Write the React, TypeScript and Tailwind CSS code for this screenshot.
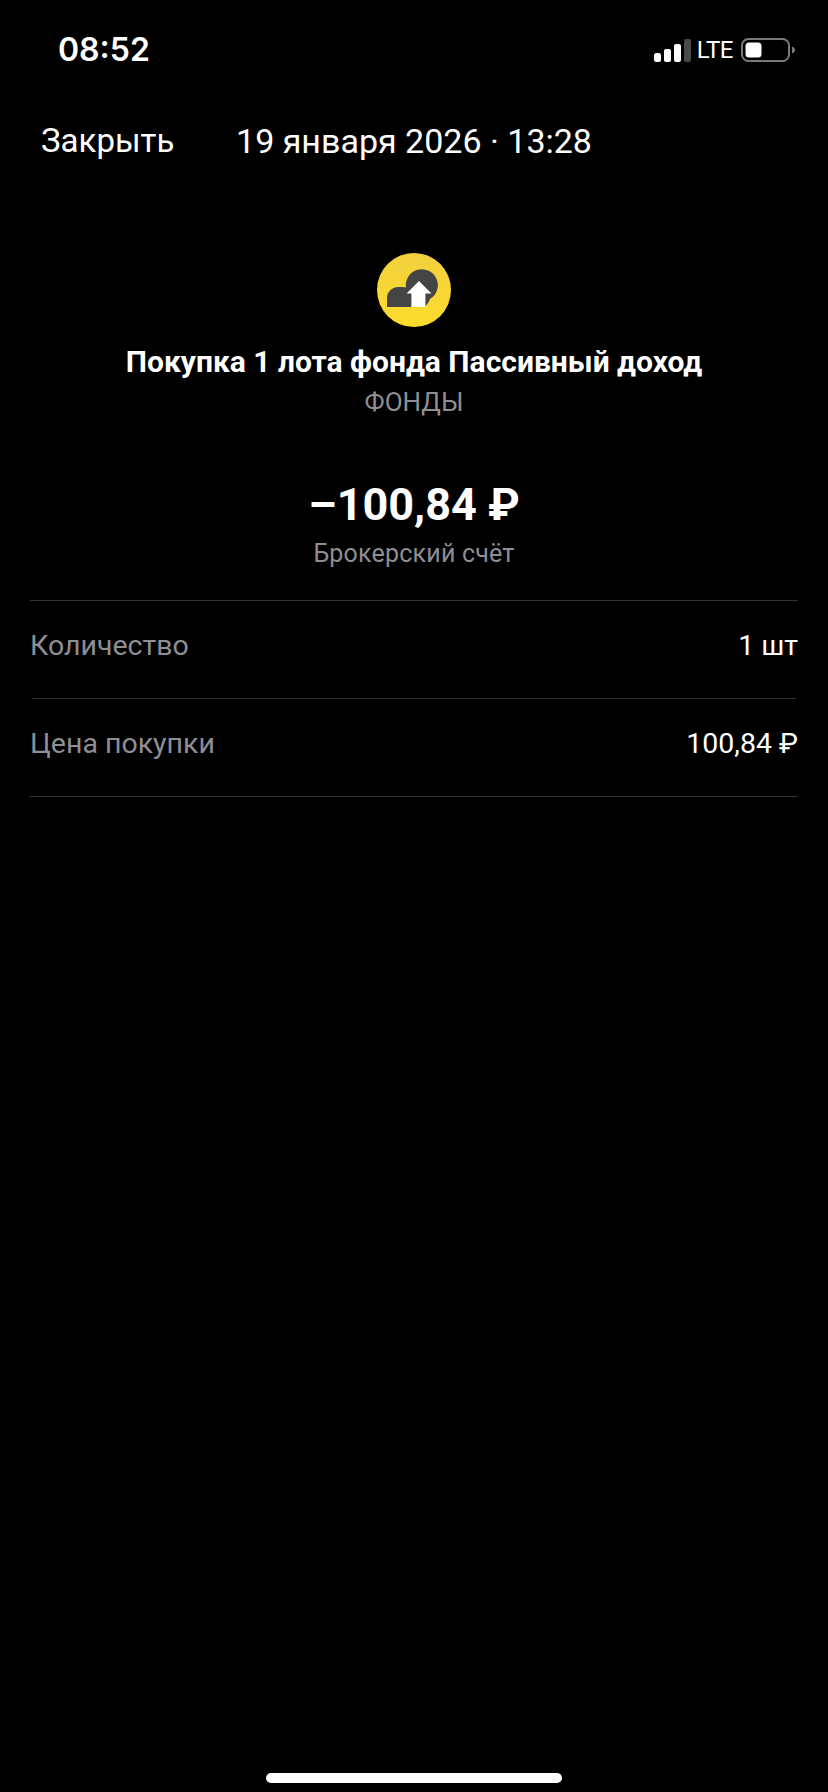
const sans = "font-['Roboto','Liberation_Sans',sans-serif]";

function SignalIcon() {
  return (
    <svg width="37" height="23" viewBox="0 0 37 23" fill="none">
      <rect x="0" y="14" width="7" height="9" rx="2.5" fill="#fff" />
      <rect x="10" y="10" width="7" height="13" rx="2" fill="#fff" />
      <rect x="20" y="5" width="7" height="18" rx="2" fill="#fff" />
      <rect x="30" y="0" width="7" height="23" rx="2" fill="#4a4a4a" />
    </svg>
  );
}

function BatteryIcon() {
  return (
    <svg width="54" height="24" viewBox="0 0 54 24" fill="none">
      <rect x="1" y="1" width="47" height="22" rx="6.5" stroke="#7a7a7a" strokeWidth="2" />
      <rect x="4.5" y="4.5" width="16" height="15" rx="3.5" fill="#fff" />
      <path d="M51 8.5 C53 9.5 54 10.5 54 12 C54 13.5 53 14.5 51 15.5 Z" fill="#7a7a7a" />
    </svg>
  );
}

function FundIcon() {
  return (
    <svg width="74" height="74" viewBox="0 0 74 74">
      <defs>
        <linearGradient id="fund-bg" x1="0" y1="0" x2="0" y2="1">
          <stop offset="0" stopColor="#f2d03e" />
          <stop offset="1" stopColor="#fddc2d" />
        </linearGradient>
      </defs>
      <circle cx="37" cy="37" r="37" fill="url(#fund-bg)" />
      <path
        d="M10 54 V45 C10 39 15 34 21 34 C24 34 27 34 29 34.5 A16 16 0 1 1 53 46 C52 49 50 52 47 54 Z"
        fill="#454545"
      />
      <path d="M29.5 40.6 L42 28 L54.5 40.6 L48.4 40.6 L48.4 54 L34.4 54 L34.4 40.6 Z" fill="#fff" />
    </svg>
  );
}

function Row({ label, value }: { label: string; value: string }) {
  return (
    <div className="flex items-center justify-between h-[97px] pb-[8px] mx-[30px] text-[28.5px] leading-[32px]">
      <span className="text-[#8e8e93]">{label}</span>
      <span className="text-white">{value}</span>
    </div>
  );
}

export default function App() {
  return (
    <div className={`${sans} relative h-[1792px] w-[828px] bg-black text-white overflow-hidden flex flex-col`}>
      {/* status bar */}
      <div className="flex items-center justify-between h-[100px] pl-[58px] pr-[33px]">
        <span className="text-[32px] font-semibold leading-[40px] font-['Inter',sans-serif]">08:52</span>
        <div className="flex items-center">
          <SignalIcon />
          <span className="ml-[6px] mr-[8px] text-[24px] leading-[28px] tracking-[-0.5px]">LTE</span>
          <BatteryIcon />
        </div>
      </div>

      {/* header */}
      <div className="grid grid-cols-[1fr_auto_1fr] items-center h-[82px] px-[41px] text-[34px] leading-[42px]">
        <span className="text-[33px]">Закрыть</span>
        <span>19 января 2026 · 13:28</span>
        <span />
      </div>

      {/* summary */}
      <div className="flex flex-col items-center mt-[71px]">
        <FundIcon />
        <div className="mt-[18px] text-[30px] font-bold leading-[34px]">Покупка 1 лота фонда Пассивный доход</div>
        <div className="mt-[7px] text-[26px] leading-[32px] text-[#8e8e93]">ФОНДЫ</div>
        <div className="mt-[59px] text-[45px] font-bold leading-[56px]">–100,84 ₽</div>
        <div className="mt-[6px] text-[25px] leading-[30px] tracking-[0.2px] text-[#8e8e93]">Брокерский счёт</div>
      </div>

      {/* details */}
      <div className="mt-[31px]">
        <div className="h-px mx-[30px] bg-[#333336]" />
        <Row label="Количество" value="1 шт" />
        <div className="h-px mx-[32px] bg-[#333336]" />
        <Row label="Цена покупки" value="100,84 ₽" />
        <div className="h-px mx-[30px] bg-[#333336]" />
      </div>

      {/* home indicator */}
      <div className="mt-auto mb-[9px] mx-auto h-[10px] w-[296px] rounded-full bg-white" />
    </div>
  );
}
